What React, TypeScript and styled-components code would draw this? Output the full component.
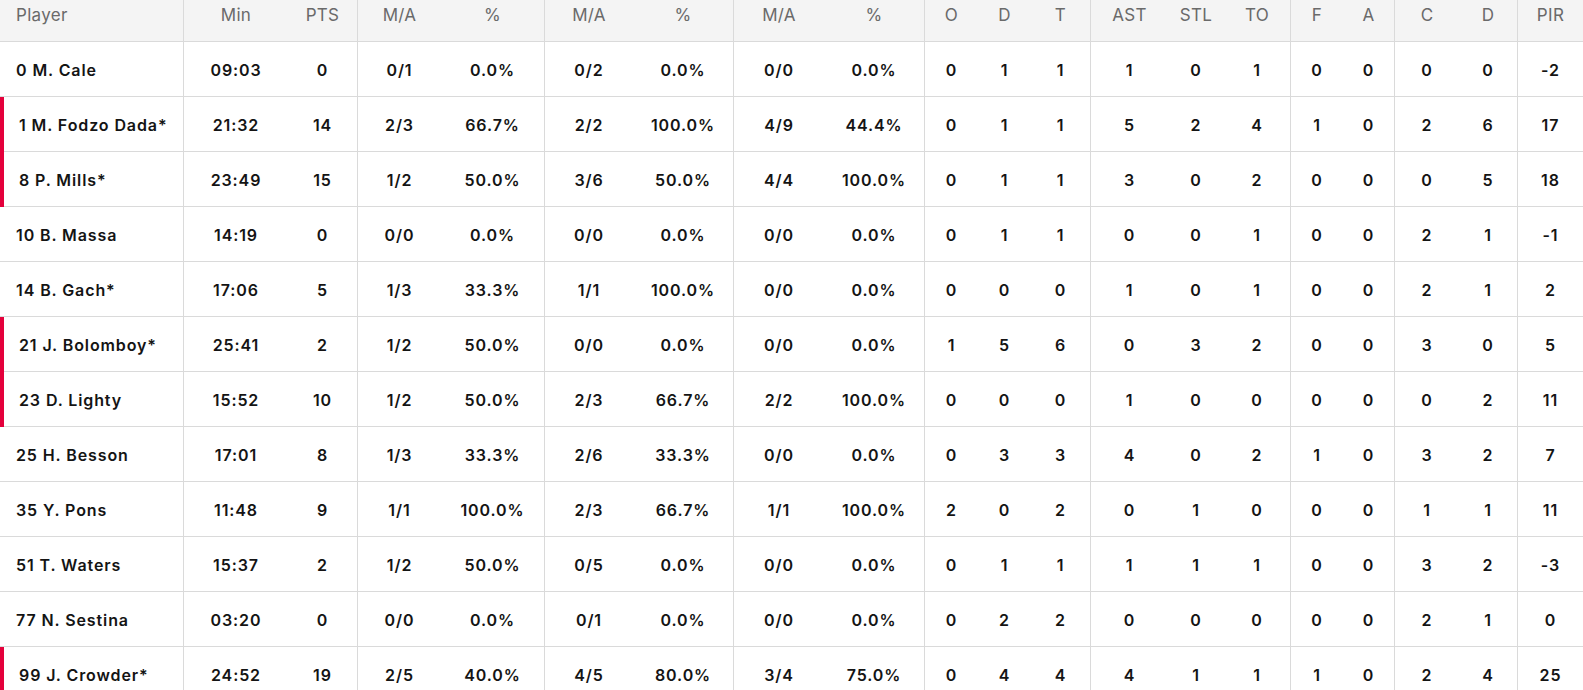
import React from "react";
import styled, { createGlobalStyle } from "styled-components";

const GlobalStyle = createGlobalStyle`
  html, body { margin: 0; padding: 0; background: #ffffff; }
  body { font-family: Inter, "Noto Sans", sans-serif; color: #111; }
`;

const COLS = "184px 104px 70px 83px 104px 88px 101px 90px 101px 53px 53px 60px 77px 56px 67px 52px 52px 64px 59px 65px";
const GROUP_ENDS = new Set([0, 2, 4, 6, 8, 11, 14, 16, 18]);

const Table = styled.div`
  width: 1583px;
  display: flex;
  flex-direction: column;
`;

const Row = styled.div<{ $header?: boolean }>`
  display: grid;
  grid-template-columns: ${COLS};
  height: ${(p) => (p.$header ? "42px" : "55px")};
  box-sizing: border-box;
  border-bottom: 1px solid #dadada;
  background: ${(p) => (p.$header ? "#f4f4f4" : "#ffffff")};
`;

const HeadCell = styled.div<{ $end?: boolean; $left?: boolean }>`
  display: flex;
  align-items: flex-start;
  justify-content: ${(p) => (p.$left ? "flex-start" : "center")};
  padding: 4px 0 0 ${(p) => (p.$left ? "16px" : "0")};
  box-sizing: border-box;
  border-right: ${(p) => (p.$end ? "1px solid #dadada" : "none")};
  font-size: 17px;
  line-height: 22px;
  letter-spacing: 0.3px;
  font-weight: 400;
  color: #6a6a6a;
  white-space: nowrap;
`;

const Cell = styled.div<{ $end?: boolean }>`
  display: flex;
  align-items: center;
  justify-content: center;
  padding-top: 1px;
  box-sizing: border-box;
  border-right: ${(p) => (p.$end ? "1px solid #dadada" : "none")};
  font-size: 16px;
  letter-spacing: 0.9px;
  font-weight: 600;
  color: #141414;
  white-space: nowrap;
`;

const PlayerCell = styled(Cell)<{ $starter?: boolean }>`
  justify-content: flex-start;
  padding-left: ${(p) => (p.$starter ? "15px" : "16px")};
  border-left: ${(p) => (p.$starter ? "4px solid #e4003b" : "none")};
  margin-bottom: ${(p) => (p.$starter ? "-1px" : "0")};
  letter-spacing: 0.9px;
`;

const headers = ["Player", "Min", "PTS", "M/A", "%", "M/A", "%", "M/A", "%", "O", "D", "T", "AST", "STL", "TO", "F", "A", "C", "D", "PIR"];

type P = { name: string; starter?: boolean; stats: string[] };

const players: P[] = [
  { name: "0 M. Cale", stats: ["09:03", "0", "0/1", "0.0%", "0/2", "0.0%", "0/0", "0.0%", "0", "1", "1", "1", "0", "1", "0", "0", "0", "0", "-2"] },
  { name: "1 M. Fodzo Dada*", starter: true, stats: ["21:32", "14", "2/3", "66.7%", "2/2", "100.0%", "4/9", "44.4%", "0", "1", "1", "5", "2", "4", "1", "0", "2", "6", "17"] },
  { name: "8 P. Mills*", starter: true, stats: ["23:49", "15", "1/2", "50.0%", "3/6", "50.0%", "4/4", "100.0%", "0", "1", "1", "3", "0", "2", "0", "0", "0", "5", "18"] },
  { name: "10 B. Massa", stats: ["14:19", "0", "0/0", "0.0%", "0/0", "0.0%", "0/0", "0.0%", "0", "1", "1", "0", "0", "1", "0", "0", "2", "1", "-1"] },
  { name: "14 B. Gach*", stats: ["17:06", "5", "1/3", "33.3%", "1/1", "100.0%", "0/0", "0.0%", "0", "0", "0", "1", "0", "1", "0", "0", "2", "1", "2"] },
  { name: "21 J. Bolomboy*", starter: true, stats: ["25:41", "2", "1/2", "50.0%", "0/0", "0.0%", "0/0", "0.0%", "1", "5", "6", "0", "3", "2", "0", "0", "3", "0", "5"] },
  { name: "23 D. Lighty", starter: true, stats: ["15:52", "10", "1/2", "50.0%", "2/3", "66.7%", "2/2", "100.0%", "0", "0", "0", "1", "0", "0", "0", "0", "0", "2", "11"] },
  { name: "25 H. Besson", stats: ["17:01", "8", "1/3", "33.3%", "2/6", "33.3%", "0/0", "0.0%", "0", "3", "3", "4", "0", "2", "1", "0", "3", "2", "7"] },
  { name: "35 Y. Pons", stats: ["11:48", "9", "1/1", "100.0%", "2/3", "66.7%", "1/1", "100.0%", "2", "0", "2", "0", "1", "0", "0", "0", "1", "1", "11"] },
  { name: "51 T. Waters", stats: ["15:37", "2", "1/2", "50.0%", "0/5", "0.0%", "0/0", "0.0%", "0", "1", "1", "1", "1", "1", "0", "0", "3", "2", "-3"] },
  { name: "77 N. Sestina", stats: ["03:20", "0", "0/0", "0.0%", "0/1", "0.0%", "0/0", "0.0%", "0", "2", "2", "0", "0", "0", "0", "0", "2", "1", "0"] },
  { name: "99 J. Crowder*", starter: true, stats: ["24:52", "19", "2/5", "40.0%", "4/5", "80.0%", "3/4", "75.0%", "0", "4", "4", "4", "1", "1", "1", "0", "2", "4", "25"] },
];

export default function App() {
  return (
    <>
      <GlobalStyle />
      <Table>
        <Row $header>
          {headers.map((h, i) => (
            <HeadCell key={i} $left={i === 0} $end={GROUP_ENDS.has(i)}>
              {h}
            </HeadCell>
          ))}
        </Row>
        {players.map((p) => (
          <Row key={p.name}>
            <PlayerCell $starter={p.starter} $end>
              {p.name}
            </PlayerCell>
            {p.stats.map((s, i) => (
              <Cell key={i} $end={GROUP_ENDS.has(i + 1)}>
                {s}
              </Cell>
            ))}
          </Row>
        ))}
      </Table>
    </>
  );
}
